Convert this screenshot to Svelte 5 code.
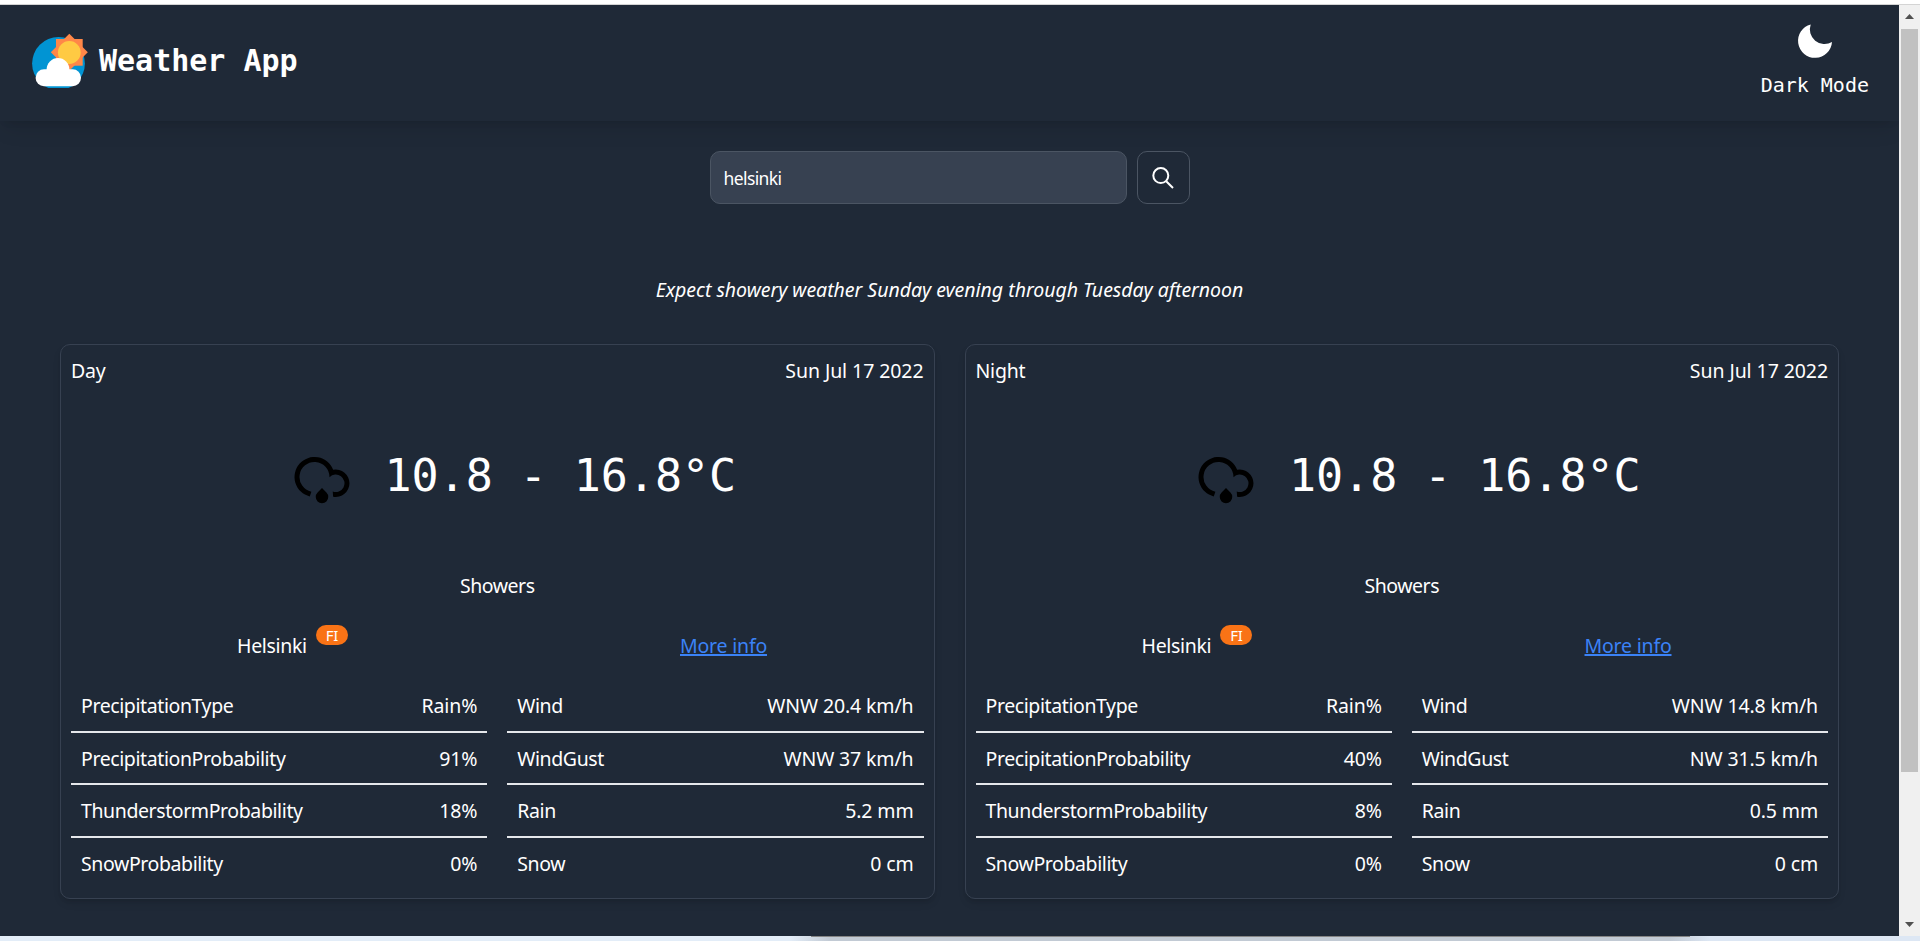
<script>
  const cards = [
    {
      title: 'Day',
      left: [['PrecipitationType', 'Rain%'], ['PrecipitationProbability', '91%'], ['ThunderstormProbability', '18%'], ['SnowProbability', '0%']],
      right: [['Wind', 'WNW 20.4 km/h'], ['WindGust', 'WNW 37 km/h'], ['Rain', '5.2 mm'], ['Snow', '0 cm']]
    },
    {
      title: 'Night',
      left: [['PrecipitationType', 'Rain%'], ['PrecipitationProbability', '40%'], ['ThunderstormProbability', '8%'], ['SnowProbability', '0%']],
      right: [['Wind', 'WNW 14.8 km/h'], ['WindGust', 'NW 31.5 km/h'], ['Rain', '0.5 mm'], ['Snow', '0 cm']]
    }
  ];
  let query = $state('helsinki');
</script>

<div class="screen">
  <div class="top-edge"></div>
  <div class="view">
    <div class="page">
      <header>
        <div class="brand">
          <svg class="logo" width="60" height="56" viewBox="2 3 60 56">
            <circle cx="30.5" cy="34.5" r="26.4" fill="#0194d3" />
            <path d="M28 10h26.7v26.7H28z" fill="#ff8748" />
            <path d="M41.3 4.8 59.8 23.3 41.3 41.8 22.8 23.3z" fill="#ff8748" />
            <circle cx="41.3" cy="23.5" r="11.4" fill="#ffca43" />
            <rect x="7.6" y="40.3" width="45.4" height="16.9" rx="8.4" fill="#fff" />
            <circle cx="30" cy="40.5" r="11.4" fill="#fff" />
          </svg>
          <h1>Weather App</h1>
        </div>
        <div class="mode">
          <svg width="40" height="40" viewBox="5 5 40 40">
            <path d="M20.7 8.4A14.7 14.7 0 0 0 42 26A17 17 0 1 1 20.7 8.4z" fill="#fff" />
          </svg>
          <span>Dark Mode</span>
        </div>
      </header>

      <main>
        <div class="search">
          <input type="text" bind:value={query} aria-label="City" />
          <button aria-label="Search">
            <svg width="24" height="24" viewBox="0 0 24 24" fill="none" stroke="#fff" stroke-width="2">
              <circle cx="9.8" cy="9.6" r="7.5" />
              <path d="m15.2 15.2 6.8 6.8" />
            </svg>
          </button>
        </div>
        <p class="headline">Expect showery weather Sunday evening through Tuesday afternoon</p>

        <div class="cards">
          {#each cards as card}
            <section class="card">
              <div class="head"><span class="name">{card.title}</span><span class="date">Sun Jul 17 2022</span></div>
              <div class="temp">
                <svg width="60" height="60" viewBox="0 0 24 24">
                  <path d="M16.45 17.9 16.3 15.79A3.5 3.5 0 1 0 15 10.05V10A6 6 0 1 0 7.75 15.87L7.1 17.77A8 8 0 1 1 16.458 7.098A5.5 5.5 0 1 1 16.45 17.9z" />
                  <path d="m12 14.4 1.77 1.83a2.5 2.5 0 1 1-3.54 0z" />
                </svg>
                <span>10.8 - 16.8°C</span>
              </div>
              <p class="phrase">Showers</p>
              <div class="place">
                <div class="city"><span>Helsinki</span><span class="badge">FI</span></div>
                <a href="#info">More info</a>
              </div>
              <div class="stats">
                {#each [card.left, card.right] as list}
                  <div class="list">
                    {#each list as [label, value]}
                      <div class="row"><span class="label">{label}</span><span class="value">{value}</span></div>
                    {/each}
                  </div>
                {/each}
              </div>
            </section>
          {/each}
        </div>
      </main>
    </div>
    <div class="scrollbar">
      <svg width="9" height="5" viewBox="0 0 9 5"><path d="M0 5 4.5 0 9 5z" fill="#505050" /></svg>
      <div class="thumb"></div>
      <svg class="down" width="9" height="5" viewBox="0 0 9 5"><path d="M0 0h9L4.5 5z" fill="#505050" /></svg>
    </div>
  </div>
  <div class="bottom-edge"><i></i></div>
</div>

<style>
  :global(body) { margin: 0; overflow: hidden; }
  * { box-sizing: border-box; }
  .screen {
    width: 1920px; height: 941px; display: flex; flex-direction: column; overflow: hidden;
    font: 19.5px/30px "Noto Sans", "Open Sans", sans-serif; color: #fff;
  }
  .top-edge { height: 5px; background: #fff; border-bottom: 1px solid #d4d4d4; }
  .view { height: 931px; display: flex; }
  .page { width: 1899px; background: #1f2937; }
  svg { display: block; flex: none; }

  header {
    height: 116px; padding: 16px 30px 0; display: flex; justify-content: space-between;
    box-shadow: 0 12px 19px -4px rgba(0, 0, 0, 0.1), 0 5px 8px -5px rgba(0, 0, 0, 0.1);
  }
  .brand { display: flex; align-items: flex-start; padding-top: 11px; gap: 9px; }
  h1 { margin: 11px 0 0; font: bold 30px/36px "DejaVu Sans Mono", monospace; }
  .mode { display: flex; flex-direction: column; align-items: center; }
  .mode span { font: 20px/24px "DejaVu Sans Mono", monospace; margin-top: 12px; }

  main { padding: 30px 60px 0; }
  .search { display: flex; justify-content: center; gap: 10px; }
  .search input {
    width: 417px; height: 53px; padding: 0 13px; border: 1px solid #4b5563; border-radius: 10px;
    background: #374151; color: #fff; font: 17.5px "Noto Sans", sans-serif; letter-spacing: -0.6px; outline: none;
  }
  .search button {
    width: 53px; height: 53px; padding: 0; display: grid; place-items: center;
    background: none; border: 1px solid #4b5563; border-radius: 10px;
  }
  .headline { margin: 71px 0 0; text-align: center; font-style: italic; letter-spacing: -0.02px; }

  .cards { display: grid; grid-template-columns: 1fr 1fr; gap: 30px; margin-top: 39px; }
  .card {
    height: 555px; padding: 10px; border: 1px solid #374151; border-radius: 10px;
    box-shadow: 0 5px 8px -1px rgba(0, 0, 0, 0.1), 0 3px 5px -2px rgba(0, 0, 0, 0.1);
  }
  .head { display: flex; justify-content: space-between; padding-top: 1px; }
  .name { letter-spacing: -0.2px; }
  .date { letter-spacing: -0.08px; }
  .temp { display: flex; padding-left: 220.5px; margin-top: 66px; gap: 33px; }
  .temp span { font: 45px/60px "DejaVu Sans Mono", monospace; letter-spacing: -0.05px; margin-top: -6px; height: 60px; }
  .phrase { margin: 59px 0 0; text-align: center; letter-spacing: -0.45px; }
  .place { display: flex; padding: 0 0 0 166px; margin-top: 30px; }
  .city { display: flex; width: 443px; letter-spacing: -0.32px; gap: 9px; }
  .badge {
    height: 20px; width: 32px; margin-top: -6px; border-radius: 10px; background: #f97316;
    font-size: 15px; line-height: 20px; text-align: center;
  }
  a { color: #3b82f6; text-decoration: underline; text-decoration-thickness: 2px; text-underline-offset: 1px; text-decoration-skip-ink: none; letter-spacing: -0.2px; }
  .stats { display: grid; grid-template-columns: 1fr 1fr; gap: 20px; margin-top: 19px; }
  .row { height: 52.5px; padding: 11px 10px 0; display: flex; justify-content: space-between; border-bottom: 2px solid #e5e7eb; }
  .row:last-child { border: 0; }
  .label { letter-spacing: -0.4px; }
  .value { letter-spacing: -0.13px; }

  .scrollbar { width: 21px; background: #f0f0f0; display: flex; flex-direction: column; align-items: center; padding: 9px 0; }
  .thumb { width: 17px; height: 743px; margin-top: 10px; background: #c1c1c1; }
  .down { margin-top: auto; }
  .bottom-edge { height: 5px; padding-left: 811px; background: linear-gradient(90deg, #e3edf8 0 790px, #c2cad4 830px 1670px, #dde7f4 1710px); }
  .bottom-edge i { display: block; width: 879px; height: 1px; background: #858585; }
</style>
